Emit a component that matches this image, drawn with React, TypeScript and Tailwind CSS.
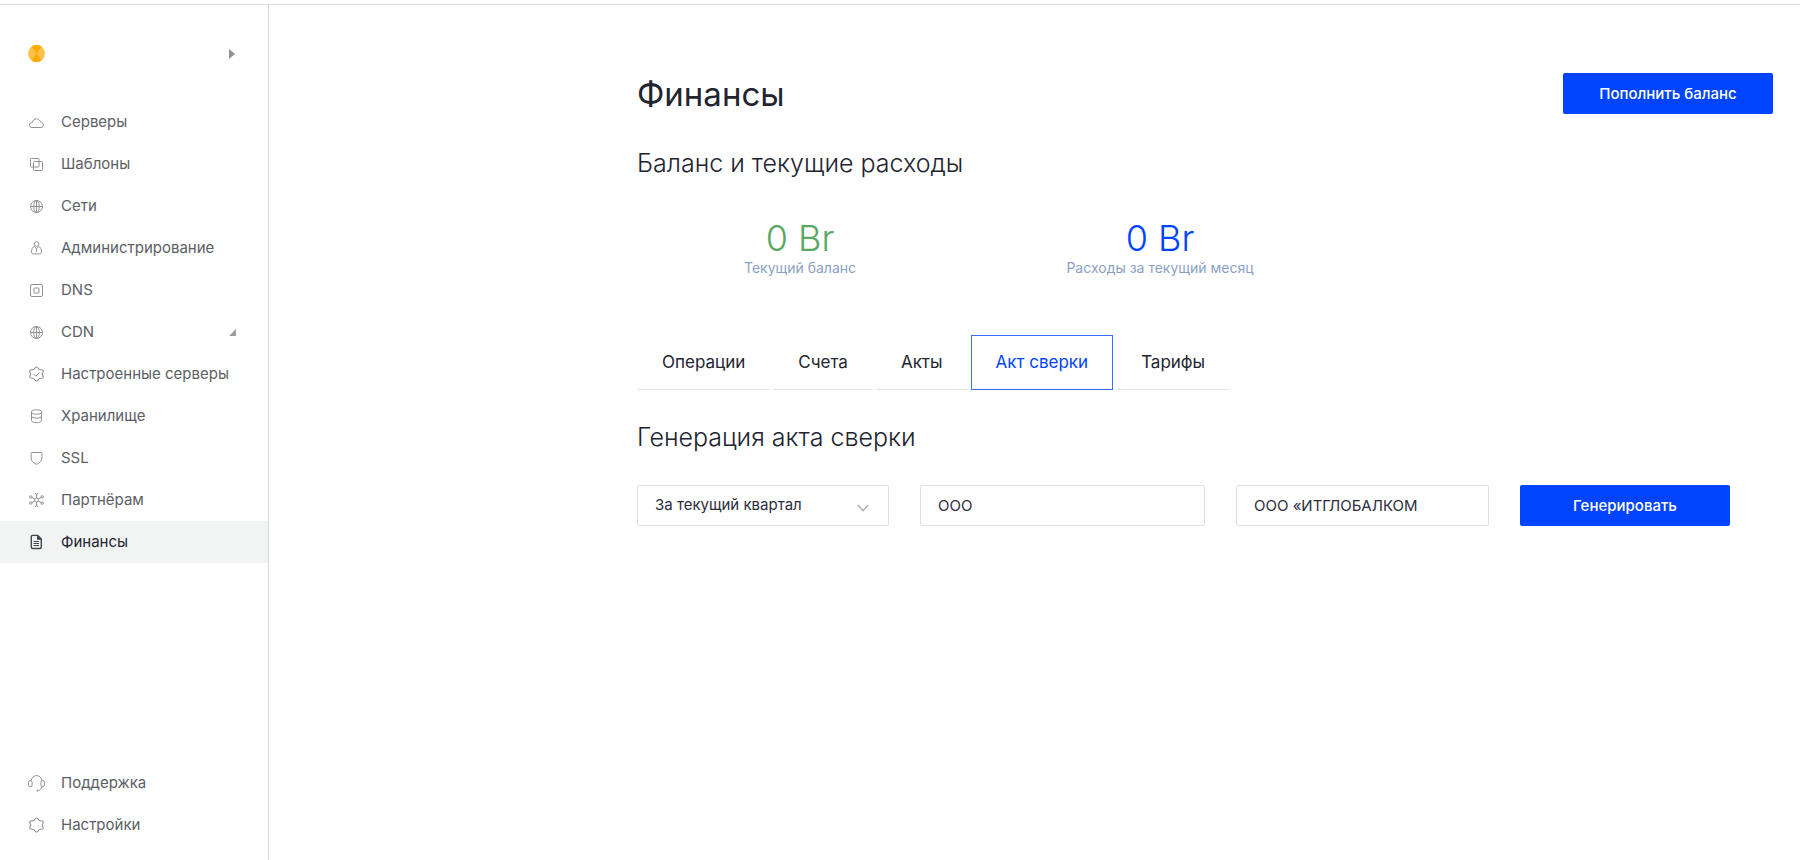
import { useState } from "react";
import type { ReactNode } from "react";
import clsx from "clsx";

interface NavItem {
  label: string;
  icon: ReactNode;
  expandable?: boolean;
}

const globe = (
  <>
    <circle cx="8.5" cy="8.5" r="6" />
    <ellipse cx="8.5" cy="8.5" rx="2.8" ry="6" />
    <path d="M2.5 8.5h12M8.5 2.5v12" />
  </>
);

const gear = (
  <path
    transform="translate(-1.1 -.7) scale(1.13 1.03)"
    d="M8.5 1.7C10 1.7 9.9 3.5 11.05 4.1C12.1 4.7 13.6 3.8 14.4 5.1C15.1 6.4 13.6 7.2 13.6 8.5C13.6 9.8 15.1 10.6 14.4 11.9C13.6 13.2 12.1 12.3 11.05 12.9C9.9 13.5 10 15.3 8.5 15.3C7 15.3 7.1 13.5 5.95 12.9C4.9 12.3 3.4 13.2 2.6 11.9C1.9 10.6 3.4 9.8 3.4 8.5C3.4 7.2 1.9 6.4 2.6 5.1C3.4 3.8 4.9 4.7 5.95 4.1C7.1 3.5 7 1.7 8.5 1.7z"
  />
);

const mainNav: NavItem[] = [
  {
    label: "Серверы",
    icon: (
      <path d="M4 13.5h9a2.6 2.6 0 0 0 .5-5.1C12.9 8.3 12.5 7.800 12.200 7.200 11.400 5.700 10.100 4.800 8.500 4.800c-2.200 0-3.600 1.500-4.100 3.600C2.600 8.700 1.500 9.600 1.500 11.100 1.500 12.500 2.500 13.500 4 13.500z" />
    ),
  },
  {
    label: "Шаблоны",
    icon: (
      <>
        <rect x="2.5" y="2.5" width="8.5" height="8.5" rx=".8" />
        <rect x="5.5" y="5.5" width="9" height="9" rx=".8" />
      </>
    ),
  },
  { label: "Сети", icon: globe },
  {
    label: "Администрирование",
    icon: (
      <>
        <circle cx="8.5" cy="4" r="2.3" />
        <path d="M6.7 6C4.5 7.1 3.5 9.3 3.5 12c0 1.200.6 1.900 1.800 1.900h6.400c1.200 0 1.800-.7 1.800-1.900 0-2.700-1-4.900-3.200-6M6.800 7l1.700 1.700L10.200 7M8.500 8.500V12" />
      </>
    ),
  },
  {
    label: "DNS",
    icon: (
      <>
        <rect x="2.5" y="2.5" width="12" height="12" rx="1.5" />
        <rect x="6" y="6" width="5" height="5" rx=".5" />
      </>
    ),
  },
  { label: "CDN", icon: globe, expandable: true },
  {
    label: "Настроенные серверы",
    icon: (
      <>
        {gear}
        <path d="M5.800 8.200l2 2 3.400-3.600" />
      </>
    ),
  },
  {
    label: "Хранилище",
    icon: (
      <>
        <ellipse cx="8.5" cy="4" rx="5" ry="2.2" />
        <path d="M3.5 4v8.500c0 1.200 2.200 2.200 5 2.200s5-1 5-2.200V4M3.500 8.200c0 1.100 2.200 1.900 5 1.900s5-.8 5-1.900" />
      </>
    ),
  },
  {
    label: "SSL",
    icon: (
      <path d="M4 2.5h9c.6 0 .9.3.9.9V8c0 2.700-2 4.900-5.400 6.300C5.100 12.900 3.100 10.700 3.100 8V3.400C3.100 2.800 3.400 2.500 4 2.500z" />
    ),
  },
  {
    label: "Партнёрам",
    icon: (
      <>
        <circle cx="8.5" cy="8" r="2" />
        <path d="M8.5 6V3M8.5 10v3M6.7 7L4 5.5M10.3 7L13 5.5M6.7 9L4 10.5M10.3 9l2.7 1.5" />
        <path d="M7.2 1l1.3 2 1.3-2M7.2 15l1.3-2 1.3 2" />
        <circle cx="2.8" cy="4.9" r="1.2" />
        <circle cx="14.2" cy="4.9" r="1.2" />
        <circle cx="2.8" cy="11.1" r="1.2" />
        <circle cx="14.2" cy="11.1" r="1.2" />
      </>
    ),
  },
  {
    label: "Финансы",
    icon: (
      <>
        <path
          strokeWidth="1.4"
          d="M4.800 1.400h5L13.300 5v8c0 1-.5 1.500-1.500 1.500h-7c-1 0-1.500-.5-1.500-1.500V3c0-1 .5-1.600 1.500-1.600z"
        />
        <path fill="currentColor" d="M9.500 1.500v3.800h3.800z" />
        <path d="M5.5 7.5H11M5.5 9.5H11M5.5 11.5H11" />
      </>
    ),
  },
];

const footerNav: NavItem[] = [
  {
    label: "Поддержка",
    icon: (
      <>
        <path d="M3 5.700C3.500 2.700 5.600.6 8.500.6S13.500 2.700 14 5.700M14 11.500c-.5 2.200-1.800 3.600-4 4.100" />
        <rect x=".5" y="5.5" width="3.6" height="6.2" rx="1.8" />
        <rect x="12.9" y="5.5" width="3.6" height="6.2" rx="1.8" />
        <circle cx="9.5" cy="15.7" r=".6" />
      </>
    ),
  },
  { label: "Настройки", icon: gear },
];

const tabs = ["Операции", "Счета", "Акты", "Акт сверки", "Тарифы"];

function NavLink({ item, active }: { item: NavItem; active?: boolean }) {
  return (
    <a
      href="#"
      aria-current={active ? "page" : undefined}
      className={clsx(
        "flex h-[42px] items-center gap-4 pl-7 pr-8 text-[15px]",
        active ? "bg-[#f2f4f4] text-[#22242f]" : "text-[#5c6065]"
      )}
    >
      <svg
        viewBox="0 0 17 17"
        className={clsx("size-[17px] shrink-0", active ? "text-[#41454c]" : "text-[#8f9194]")}
        fill="none"
        stroke="currentColor"
        strokeLinejoin="round"
        aria-hidden="true"
      >
        {item.icon}
      </svg>
      <span className="grow whitespace-nowrap">{item.label}</span>
      {item.expandable && (
        <svg viewBox="0 0 7 7" className="size-[7px] text-[#9a9c9f]" fill="currentColor" aria-hidden="true">
          <path d="M7 0v7H0z" />
        </svg>
      )}
    </a>
  );
}

function Sidebar() {
  return (
    <aside className="flex w-[269px] shrink-0 flex-col border-r border-[#d9dadb] pb-[14px]">
      <div className="flex h-24 items-start justify-between pl-7 pr-[33px] pt-10">
        <svg viewBox="0 0 17 17" className="size-[17px]" aria-hidden="true">
          <circle cx="8.5" cy="8.5" r="8.5" fill="#ffc14a" />
          <path fill="#ffab00" d="M8.5 8.5L3.5 1.6a8.5 8.5 0 0 1 10 0zM8.5 8.5l5 6.9a8.5 8.5 0 0 1-10 0z" />
        </svg>
        <button type="button" aria-label="Развернуть" className="flex h-[17px] items-center">
          <svg viewBox="0 0 6 10" className="h-[10px] w-[6px]" fill="#8f9194" aria-hidden="true">
            <path d="M0 0l6 5-6 5z" />
          </svg>
        </button>
      </div>
      <nav>
        {mainNav.map((item) => (
          <NavLink key={item.label} item={item} active={item.label === "Финансы"} />
        ))}
      </nav>
      <nav className="mt-auto">
        {footerNav.map((item) => (
          <NavLink key={item.label} item={item} />
        ))}
      </nav>
    </aside>
  );
}

function Stat({ value, label, color }: { value: string; label: string; color: string }) {
  return (
    <div className="w-[326px] text-center">
      <div className={clsx("text-4xl font-light leading-10", color)}>{value}</div>
      <div className="text-sm text-[#8b9fc4]">{label}</div>
    </div>
  );
}

const fieldClass =
  "h-[41px] w-full rounded-xs border border-[#dfe0e1] bg-white px-[17px] text-[15px] text-[#2b2d3c] outline-none";
const buttonClass = "h-[41px] rounded-xs bg-[#0044ff] pt-0.5 text-[15px] font-medium text-white";

export default function App() {
  const [tab, setTab] = useState("Акт сверки");

  return (
    <div className="flex min-h-screen flex-col bg-white pt-1 font-['Inter',sans-serif] text-[#22242f]">
      <div className="flex grow border-t border-[#d9dadb]">
        <Sidebar />
        <main className="grow pr-[27px]">
          <div className="ml-auto max-w-[1136px] pt-[68px]">
            <header className="flex items-start justify-between">
              <h1 className="text-[33px] leading-[42px]">Финансы</h1>
              <button type="button" className={clsx(buttonClass, "w-[210px]")}>
                Пополнить баланс
              </button>
            </header>

            <h2 className="mt-8 text-[25px] font-light leading-8">Баланс и текущие расходы</h2>
            <div className="mt-[39px] flex gap-[34px]">
              <Stat value="0 Br" label="Текущий баланс" color="text-[#5aa764]" />
              <Stat value="0 Br" label="Расходы за текущий месяц" color="text-[#0044ff]" />
            </div>

            <div role="tablist" className="mt-[57px] flex gap-[3px]">
              {tabs.map((name) => (
                <button
                  key={name}
                  type="button"
                  role="tab"
                  aria-selected={tab === name}
                  onClick={() => setTab(name)}
                  className={clsx(
                    "h-[55px] border px-6 text-[17px]",
                    tab === name
                      ? "border-[#3b6cff] text-[#0044ff]"
                      : "border-transparent border-b-[#e2e3e4]"
                  )}
                >
                  {name}
                </button>
              ))}
            </div>

            <h2 className="mt-[31px] text-[25px] font-light leading-8">Генерация акта сверки</h2>
            <form className="mt-8 flex gap-[31px]" onSubmit={(e) => e.preventDefault()}>
              <div className="relative w-[252px]">
                <select aria-label="Период" className={clsx(fieldClass, "appearance-none")}>
                  <option>За текущий квартал</option>
                </select>
                <svg
                  viewBox="0 0 12 8"
                  className="pointer-events-none absolute right-5 top-[19px] h-2 w-3"
                  fill="none"
                  stroke="#a9abae"
                  strokeWidth="1.3"
                  aria-hidden="true"
                >
                  <path d="M.8 1L6 6.8 11.2 1" />
                </svg>
              </div>
              <input aria-label="Форма организации" defaultValue="ООО" className={clsx(fieldClass, "max-w-[285px]")} />
              <input
                aria-label="Название организации"
                defaultValue="ООО «ИТГЛОБАЛКОМ"
                className={clsx(fieldClass, "max-w-[253px]")}
              />
              <button type="submit" className={clsx(buttonClass, "w-[210px]")}>
                Генерировать
              </button>
            </form>
          </div>
        </main>
      </div>
    </div>
  );
}
